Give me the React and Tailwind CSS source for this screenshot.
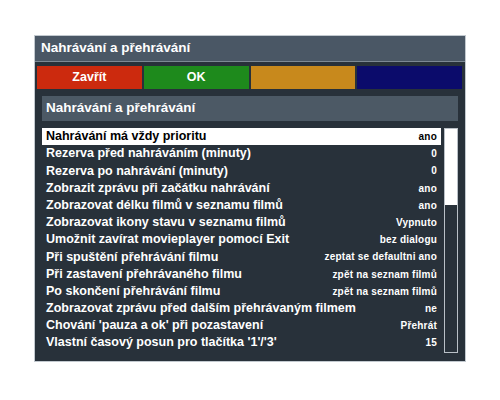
import React from 'react';

const rows = [
    ['Nahrávání má vždy prioritu', 'ano'],
    ['Rezerva před nahráváním (minuty)', '0'],
    ['Rezerva po nahrávání (minuty)', '0'],
    ['Zobrazit zprávu při začátku nahrávání', 'ano'],
    ['Zobrazovat délku filmů v seznamu filmů', 'ano'],
    ['Zobrazovat ikony stavu v seznamu filmů', 'Vypnuto'],
    ['Umožnit zavírat movieplayer pomocí Exit', 'bez dialogu'],
    ['Při spuštění přehrávání filmu', 'zeptat se defaultni ano'],
    ['Při zastavení přehrávaného filmu', 'zpět na seznam filmů'],
    ['Po skončení přehrávání filmu', 'zpět na seznam filmů'],
    ['Zobrazovat zprávu před dalším přehrávaným filmem', 'ne'],
    ["Chování 'pauza a ok' při pozastavení", 'Přehrát'],
    ["Vlastní časový posun pro tlačítka '1'/'3'", '15'],
];

const buttons = [
    { label: 'Zavřít', color: 'bg-[#cc2a0e]' },
    { label: 'OK', color: 'bg-[#1e8a1c]' },
    { label: '', color: 'bg-[#c8891c]' },
    { label: '', color: 'bg-[#0b0b6b]' },
];

export default function App() {
    return (
        <div className="w-[500px] h-[400px] bg-white pt-[35px] pl-[34px] font-['Liberation_Sans',Arial,sans-serif]">
            <div className="w-[432px] h-[327px] bg-[#28313a] border border-[#c2c9cf] flex flex-col">
                <div className="h-[26px] bg-[#4a5765] border-b border-[#7d8994] flex items-center pl-[6px] text-white text-[13.5px] font-bold">
                    Nahrávání a přehrávání
                </div>

                <div className="grid grid-cols-4 gap-[2px] mt-[4px] pl-[2px] pr-[3px]">
                    {buttons.map((b, i) => (
                        <div key={i} className={`${b.color} h-[23px] flex items-center justify-center text-white text-[12.5px] font-bold`}>
                            {b.label}
                        </div>
                    ))}
                </div>

                <div className="mx-[7px] mt-[7px] h-[25px] bg-[#4c5965] flex items-center pl-[4px] text-white text-[13.5px] font-bold">
                    Nahrávání a přehrávání
                </div>

                <div className="flex mt-[7px] ml-[7px] mr-[7px] gap-[3px]">
                    <div className="flex-1 flex flex-col">
                        {rows.map(([label, value], i) => (
                            <div
                                key={i}
                                className={`h-[17.2px] flex items-center justify-between pl-[4px] pr-[4px] whitespace-nowrap ${i === 0 ? 'bg-white text-black' : 'text-white'}`}
                            >
                                <span className="text-[12.5px] font-bold">{label}</span>
                                <span className="text-[10px] font-bold tracking-[0.2px]">{value}</span>
                            </div>
                        ))}
                    </div>
                    <div className="w-[14px] h-[225px] border border-[#b9c0c7] flex flex-col">
                        <div className="h-[76px] bg-white"></div>
                    </div>
                </div>
            </div>
        </div>
    );
}
